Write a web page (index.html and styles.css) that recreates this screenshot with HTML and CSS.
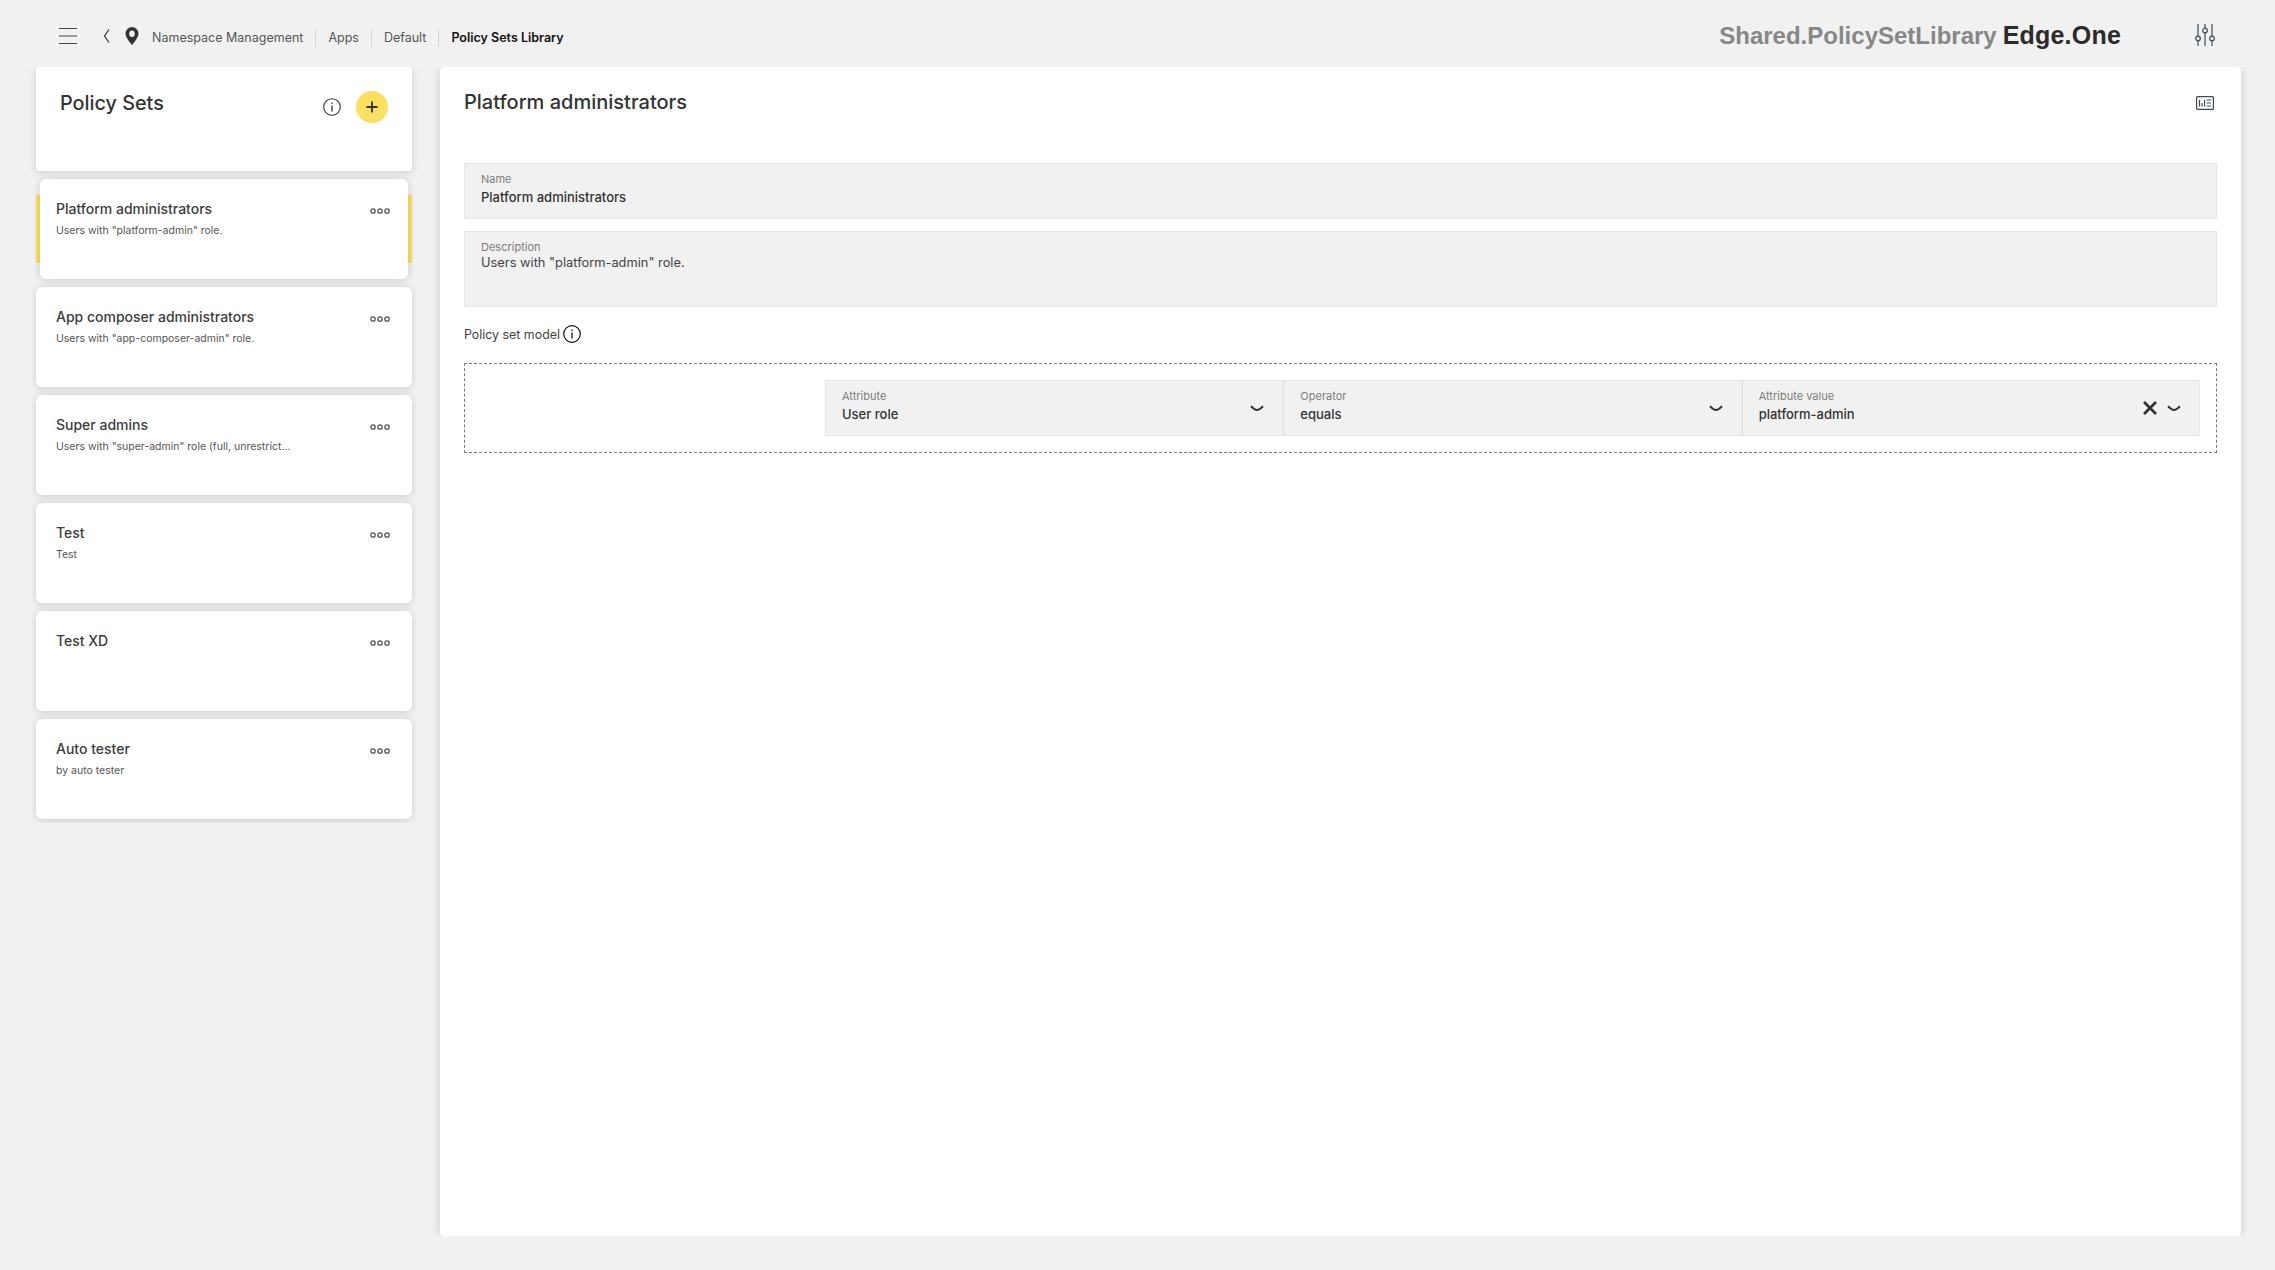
FILE: index.html
```html
<!DOCTYPE html>
<html lang="en">
<head>
<meta charset="utf-8">
<title>Policy Sets Library</title>
<link rel="stylesheet" href="styles.css">
</head>
<body>
<header class="topbar">
  <svg class="ic-menu" width="18" height="16" viewBox="0 0 18 16"><path d="M0 .5h18M0 8h18M0 15.5h18" stroke="#444" stroke-width="1"/></svg>
  <svg class="ic-back" width="7" height="14" viewBox="0 0 7 14"><path d="M6 .5 1.500 7 6 13.500" fill="none" stroke="#333" stroke-width="1.200"/></svg>
  <svg class="ic-pin" width="14" height="18" viewBox="0 0 14 18"><path fill-rule="evenodd" d="M7 0a6.500 6.500 0 0 1 6.500 6.500C13.500 11 7 18 7 18S.5 11 .5 6.500A6.500 6.500 0 0 1 7 0Zm0 3.600a2.700 3.200 0 1 0 0 6.400 2.700 3.200 0 0 0 0-6.400Z" fill="#333"/></svg>
  <nav class="crumbs">
    <span class="crumb">Namespace Management</span>
    <span class="crumb">Apps</span>
    <span class="crumb">Default</span>
    <span class="crumb crumb-current">Policy Sets Library</span>
  </nav>
  <div class="brand"><span class="brand-app">Shared.PolicySetLibrary</span><span class="brand-env">Edge.One</span></div>
  <svg class="ic-sliders" width="20" height="22" viewBox="0 0 20 22"><g fill="none" stroke="#3c4a57" stroke-width="1.200"><path d="M3 0v12M3 17v5M10 0v4M10 9v13M17 0v12M17 17v5"/><circle cx="3" cy="14.500" r="2.300"/><circle cx="10" cy="6.500" r="2.300"/><circle cx="17" cy="14.500" r="2.300"/></g></svg>
</header>

<main class="layout">
  <aside class="sidebar">
    <section class="side-head">
      <h2 class="side-title">Policy Sets</h2>
      <svg class="ic-info" width="18" height="18" viewBox="0 0 18 18"><circle cx="9" cy="9" r="8.300" fill="none" stroke="#333" stroke-width="1.100"/><path d="M9 7.500v6M9 4.500v1.600" stroke="#333" stroke-width="1.300"/></svg>
      <button class="add-btn" type="button"><svg width="12" height="12" viewBox="0 0 12 12"><path d="M6 .5v11M.5 6h11" stroke="#333" stroke-width="1.800"/></svg></button>
    </section>
    <div class="list">
      <article class="item item-selected">
        <div class="card">
          <div class="card-text"><div class="card-title">Platform administrators</div><div class="card-desc">Users with "platform-admin" role.</div></div>
          <svg class="dots" width="20" height="6" viewBox="0 0 20 6"><g fill="none" stroke="#555" stroke-width="1.300"><circle cx="3" cy="3" r="2.200"/><circle cx="10" cy="3" r="2.200"/><circle cx="17" cy="3" r="2.200"/></g></svg>
        </div>
      </article>
      <article class="item">
        <div class="card">
          <div class="card-text"><div class="card-title">App composer administrators</div><div class="card-desc">Users with "app-composer-admin" role.</div></div>
          <svg class="dots" width="20" height="6" viewBox="0 0 20 6"><g fill="none" stroke="#555" stroke-width="1.300"><circle cx="3" cy="3" r="2.200"/><circle cx="10" cy="3" r="2.200"/><circle cx="17" cy="3" r="2.200"/></g></svg>
        </div>
      </article>
      <article class="item">
        <div class="card">
          <div class="card-text"><div class="card-title">Super admins</div><div class="card-desc">Users with "super-admin" role (full, unrestrict...</div></div>
          <svg class="dots" width="20" height="6" viewBox="0 0 20 6"><g fill="none" stroke="#555" stroke-width="1.300"><circle cx="3" cy="3" r="2.200"/><circle cx="10" cy="3" r="2.200"/><circle cx="17" cy="3" r="2.200"/></g></svg>
        </div>
      </article>
      <article class="item">
        <div class="card">
          <div class="card-text"><div class="card-title">Test</div><div class="card-desc">Test</div></div>
          <svg class="dots" width="20" height="6" viewBox="0 0 20 6"><g fill="none" stroke="#555" stroke-width="1.300"><circle cx="3" cy="3" r="2.200"/><circle cx="10" cy="3" r="2.200"/><circle cx="17" cy="3" r="2.200"/></g></svg>
        </div>
      </article>
      <article class="item">
        <div class="card">
          <div class="card-text"><div class="card-title">Test XD</div></div>
          <svg class="dots" width="20" height="6" viewBox="0 0 20 6"><g fill="none" stroke="#555" stroke-width="1.300"><circle cx="3" cy="3" r="2.200"/><circle cx="10" cy="3" r="2.200"/><circle cx="17" cy="3" r="2.200"/></g></svg>
        </div>
      </article>
      <article class="item">
        <div class="card">
          <div class="card-text"><div class="card-title">Auto tester</div><div class="card-desc">by auto tester</div></div>
          <svg class="dots" width="20" height="6" viewBox="0 0 20 6"><g fill="none" stroke="#555" stroke-width="1.300"><circle cx="3" cy="3" r="2.200"/><circle cx="10" cy="3" r="2.200"/><circle cx="17" cy="3" r="2.200"/></g></svg>
        </div>
      </article>
    </div>
  </aside>

  <section class="detail">
    <div class="detail-head">
      <h1 class="detail-title">Platform administrators</h1>
      <svg class="ic-panel" width="18" height="14" viewBox="0 0 18 14"><rect x=".6" y=".6" width="16.800" height="12.800" rx="1" fill="none" stroke="#3c4a57" stroke-width="1.200"/><path d="M3.500 4v6.500M6 7v3.500M8.500 4v6.500M10.500 4h4.500M10.500 7h4.500M10.500 10h4.500" stroke="#3c4a57" stroke-width="1.200" fill="none"/></svg>
    </div>
    <div class="field field-name">
      <div class="field-label">Name</div>
      <div class="field-value">Platform administrators</div>
    </div>
    <div class="field field-desc">
      <div class="field-label">Description</div>
      <div class="field-text">Users with "platform-admin" role.</div>
    </div>
    <div class="model-head">
      <span>Policy set model</span>
      <svg width="18" height="18" viewBox="0 0 18 18"><circle cx="9" cy="9" r="8.300" fill="none" stroke="#111" stroke-width="1.200"/><path d="M9 7.500v6M9 4.500v1.600" stroke="#111" stroke-width="1.300"/></svg>
    </div>
    <div class="model">
      <div class="rule">
        <div class="select">
          <div class="select-text"><div class="field-label">Attribute</div><div class="field-value">User role</div></div>
          <svg class="chev" width="14" height="7" viewBox="0 0 14 7"><path d="M1 1.200c2 2 4 3.800 6 3.800s4-1.800 6-3.800" fill="none" stroke="#333" stroke-width="2"/></svg>
        </div>
        <div class="select">
          <div class="select-text"><div class="field-label">Operator</div><div class="field-value">equals</div></div>
          <svg class="chev" width="14" height="7" viewBox="0 0 14 7"><path d="M1 1.200c2 2 4 3.800 6 3.800s4-1.800 6-3.800" fill="none" stroke="#333" stroke-width="2"/></svg>
        </div>
        <div class="select">
          <div class="select-text"><div class="field-label">Attribute value</div><div class="field-value">platform-admin</div></div>
          <svg class="clear" width="14" height="14" viewBox="0 0 14 14"><path d="M1 1l12 12M13 1 1 13" stroke="#333" stroke-width="2.800"/></svg>
          <svg class="chev" width="14" height="7" viewBox="0 0 14 7"><path d="M1 1.200c2 2 4 3.800 6 3.800s4-1.800 6-3.800" fill="none" stroke="#333" stroke-width="2"/></svg>
        </div>
      </div>
    </div>
  </section>
</main>
</body>
</html>
```
FILE: styles.css
```css
* { box-sizing: border-box; }
html, body { margin: 0; height: 100%; }
body {
  background: #f1f1f1;
  color: #333;
  font-family: Inter, Roboto, "Liberation Sans", sans-serif;
  overflow: hidden;
}
h1, h2 { margin: 0; }

/* top bar */
.topbar {
  display: flex;
  align-items: center;
  height: 67px;
  padding: 5px 0 0 59px;
}
.ic-menu { margin-top: -1px; }
.ic-back { margin-left: 26px; }
.ic-pin { margin-left: 15px; }
.crumbs { display: flex; align-items: center; margin: 3px 0 0 13px; font-size: 12.5px; color: #555; }
.crumb { padding: 0 12px; border-left: 1px solid #d5d5d5; line-height: 18px; }
.crumb:first-child { padding-left: 0; border-left: 0; }
.crumb-current { color: #111; font-weight: 600; }
.brand {
  display: flex;
  align-items: baseline;
  gap: 6px;
  margin: -1px 0 0 auto;
  font-family: "Liberation Sans", Arial, sans-serif;
  font-weight: 700;
  font-size: 24px;
}
.brand-app { color: #878787; }
.brand-env { color: #2b2b2b; font-size: 25px; letter-spacing: .2px; }
.ic-sliders { margin: -2px 60px 0 74px; }

/* layout */
.layout {
  display: flex;
  gap: 28px;
  height: 1169px;
  padding: 0 34px 0 36px;
  overflow: hidden;
}
.sidebar { width: 376px; flex: none; }
.side-head {
  display: flex;
  align-items: flex-start;
  height: 104px;
  padding: 24px 24px 0 24px;
  background: #fff;
  border-radius: 4px;
  box-shadow: 0 1px 8px rgba(0,0,0,.16);
}
.side-title { font-size: 19.8px; font-weight: 500; line-height: 24px; margin-right: auto; }
.ic-info { margin: 7px 15px 0 0; }
.add-btn {
  display: flex;
  align-items: center;
  justify-content: center;
  width: 32px;
  height: 32px;
  padding: 0;
  border: 0;
  border-radius: 50%;
  background: #fbdf5f;
}

/* list */
.list {
  display: flex;
  flex-direction: column;
  gap: 8px;
  margin: 4px -4px 0;
  padding: 4px;
  overflow: hidden;
}
.item { position: relative; }
.item-selected { padding: 0 4px; }
.item-selected::before {
  content: "";
  position: absolute;
  inset: 16px 0;
  background: #fbdf5f;
}
.card {
  position: relative;
  display: flex;
  justify-content: space-between;
  align-items: flex-start;
  height: 100px;
  padding: 21px 22px 0 20px;
  background: #fff;
  border-radius: 6px;
  box-shadow: 0 1px 8px rgba(0,0,0,.16);
}
.item-selected .card { padding: 21px 18px 0 16px; }
.card-title { font-size: 14px; font-weight: 500; line-height: 18px; color: #3d3d3d; }
.card-desc { margin-top: 5px; font-size: 10.5px; line-height: 16px; color: #555; }
.dots { margin-top: 8px; }

/* detail */
.detail {
  flex: 1;
  height: 1169px;
  padding: 0 24px;
  background: #fff;
  border-radius: 4px;
  box-shadow: 0 1px 8px rgba(0,0,0,.16);
}
.detail-head {
  display: flex;
  justify-content: space-between;
  align-items: flex-start;
  height: 96px;
  padding-top: 23px;
}
.detail-title { font-size: 20px; font-weight: 500; line-height: 24px; color: #333; }
.ic-panel { margin-top: 6px; margin-right: 3px; }
.field {
  padding: 8px 16px 0;
  background: #f1f1f1;
  border: 1px solid #e6e6e6;
}
.field-name { height: 56px; }
.field-desc { height: 76px; margin-top: 12px; }
.field-label { font-size: 11px; line-height: 14px; color: #7d7d7d; }
.field-value { margin-top: 2px; font-size: 13px; font-weight: 500; line-height: 18px; color: #333; }
.field-text { font-size: 12.85px; line-height: 18px; color: #444; }
.model-head {
  display: flex;
  align-items: center;
  gap: 3px;
  height: 20px;
  margin-top: 17px;
  font-size: 12.4px;
  color: #444;
}
.model {
  display: flex;
  justify-content: flex-end;
  height: 90px;
  margin-top: 19px;
  padding: 16px 16px 0;
  border: 1px dashed #777;
}
.rule { display: flex; width: 1375px; height: 56px; }
.select {
  display: flex;
  align-items: center;
  flex: 1;
  padding: 0 18px 0 16px;
  background: #f1f1f1;
  border: 1px solid #e6e6e6;
}
.select-text { flex: 1; margin-top: -4px; }
.clear { margin-right: 10px; }
```
